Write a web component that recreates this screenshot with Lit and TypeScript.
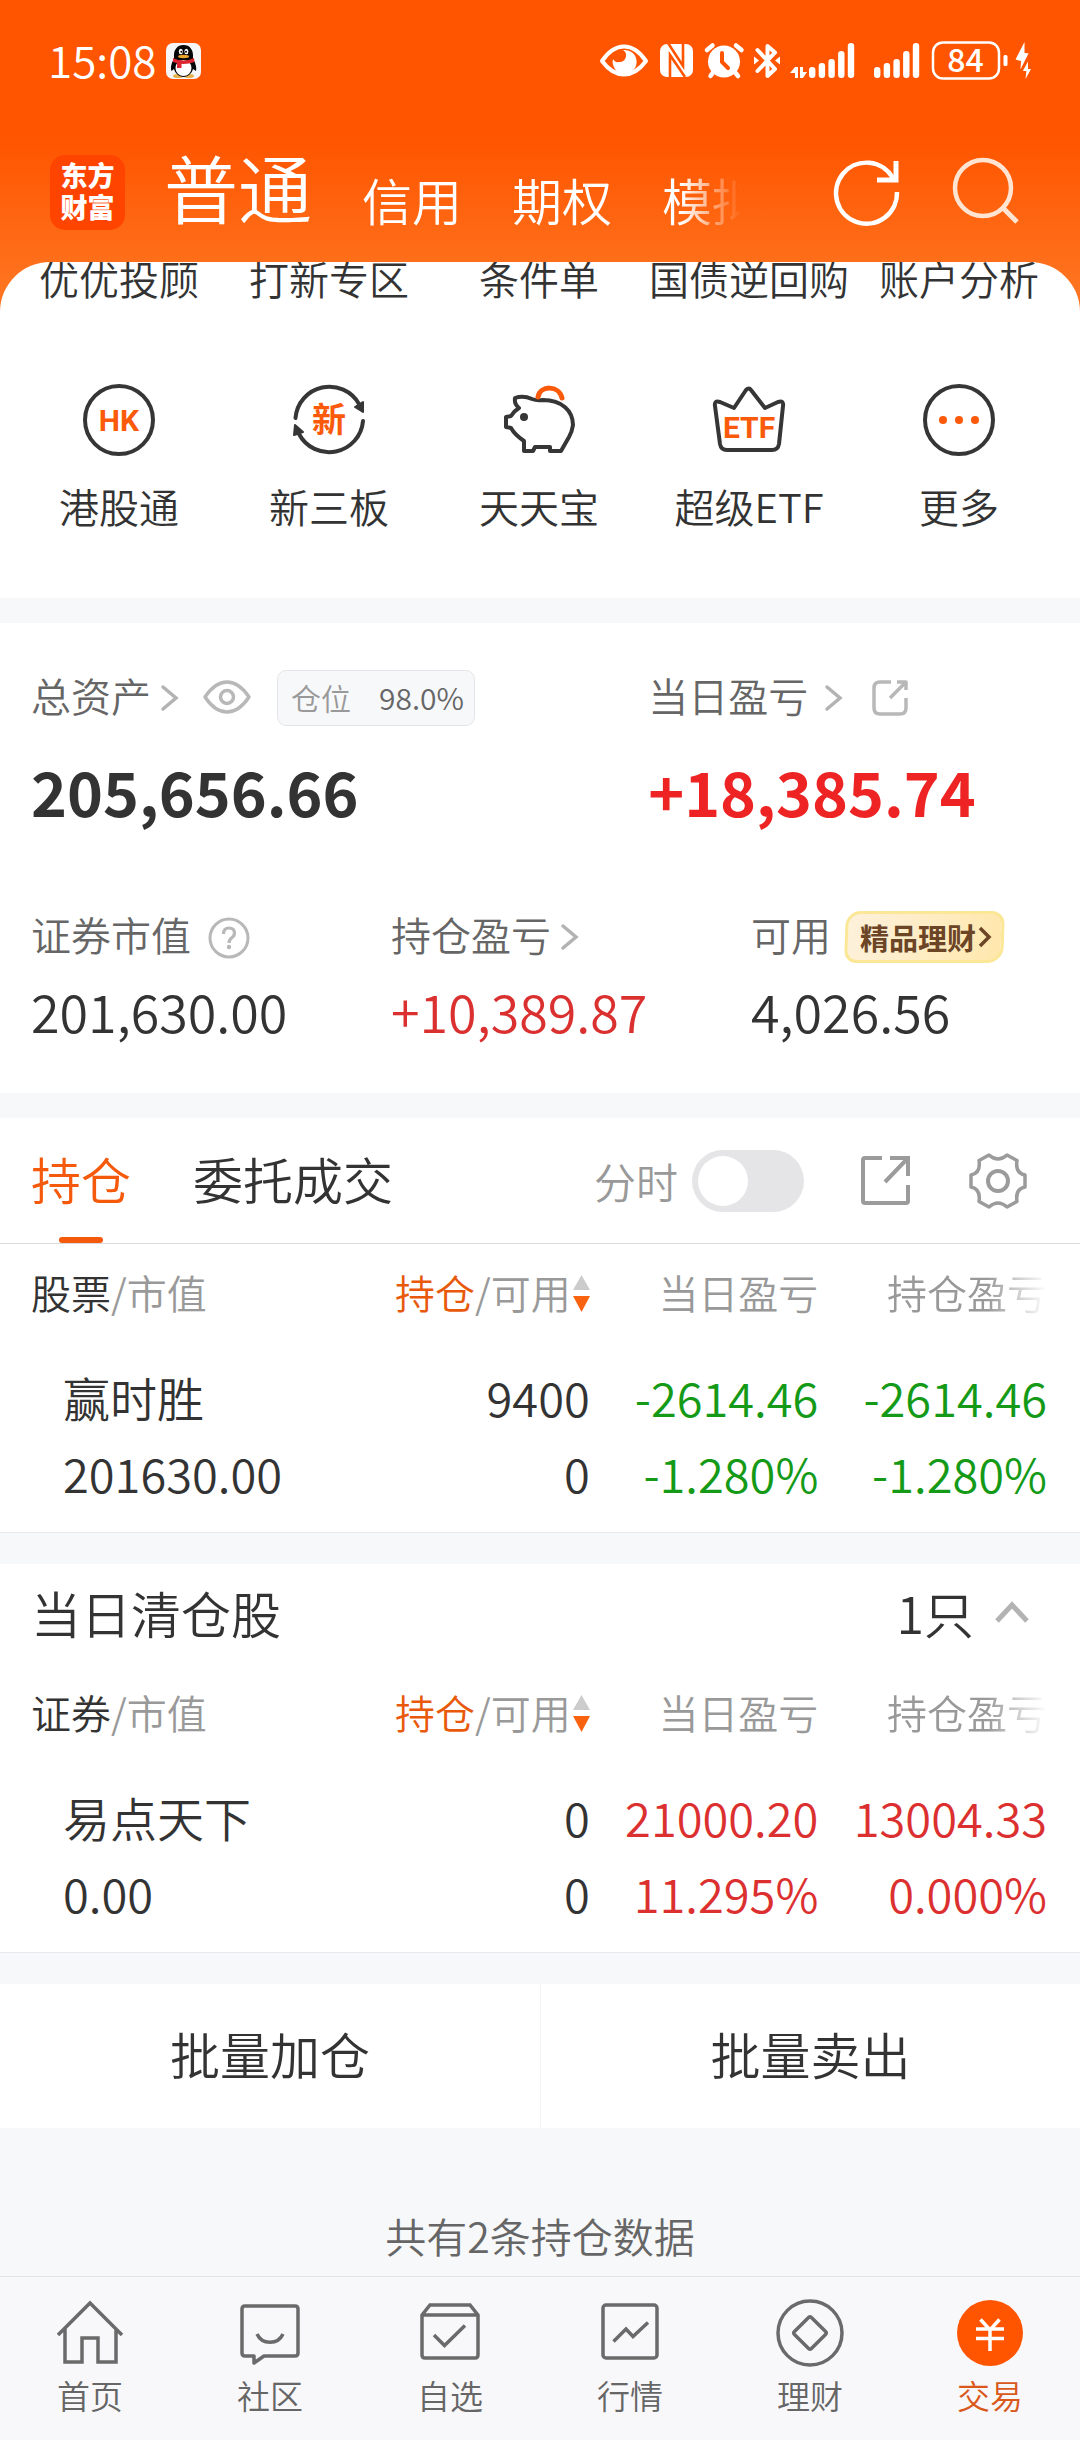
import { LitElement, html, css, svg, nothing } from "lit";
import { customElement, property, state } from "lit/decorators.js";
import { classMap } from "lit/directives/class-map.js";

type Tone = "ink" | "up" | "down";

interface Holding {
  name: string;
  value: string;
  held: string;
  usable: string;
  day: [string, string];
  total: [string, string];
  tone: Tone;
}

const openPositions: Holding[] = [
  {
    name: "赢时胜",
    value: "201630.00",
    held: "9400",
    usable: "0",
    day: ["-2614.46", "-1.280%"],
    total: ["-2614.46", "-1.280%"],
    tone: "down",
  },
];

const closedPositions: Holding[] = [
  {
    name: "易点天下",
    value: "0.00",
    held: "0",
    usable: "0",
    day: ["21000.20", "11.295%"],
    total: ["13004.33", "0.000%"],
    tone: "up",
  },
];

const fontStack = css`"Noto Sans CJK SC", "Noto Sans", sans-serif`;

const reset = css`
  *,
  *::before,
  *::after {
    box-sizing: border-box;
  }
  button {
    font: inherit;
    color: inherit;
    background: none;
    border: 0;
    padding: 0;
    margin: 0;
    text-align: inherit;
    cursor: pointer;
  }
  a {
    color: inherit;
    text-decoration: none;
  }
  svg {
    display: block;
    flex: none;
    overflow: visible;
  }
`;

const signalBars = (left: number) =>
  [26, 22, 18, 10, 2].map(
    (top, i) => svg`<rect x=${left + i * 9.7} y=${top} width="6.4" height=${37 - top} rx="3" fill="#fff"/>`,
  );

const chevronRight = html`<svg width="20" height="28" viewBox="0 0 20 28" aria-hidden="true">
  <path d="M3 3L16 14L3 25" fill="none" stroke="#b3b3b3" stroke-width="3.5" stroke-linecap="round"/>
</svg>`;

@customElement("status-bar")
export class StatusBar extends LitElement {
  static styles = [
    reset,
    css`
      :host {
        display: flex;
        align-items: center;
        height: 122px;
        padding: 0 48px;
        color: #fff;
      }
      .time {
        padding-bottom: 5px;
        font-size: 44px;
        line-height: 56px;
        margin-right: 10px;
      }
      .icons {
        display: flex;
        gap: 10px;
        margin-left: auto;
      }
      .battery {
        font-size: 32px;
        font-weight: 500;
      }
    `,
  ];

  render() {
    return html`
      <span class="time">15:08</span>
      <svg width="36" height="36" viewBox="0 0 36 36" aria-hidden="true">
        <rect width="35" height="36" rx="7" fill="#f6f6f8"/>
        <ellipse cx="12" cy="33" rx="5" ry="2" fill="#e5b24d"/>
        <ellipse cx="23" cy="33" rx="5" ry="2" fill="#e5b24d"/>
        <path d="M17.5 2C11 2 8 7 8 12V16C6 19 4 24 5.500 28L8 26C9 30 13 34 17.500 34C22 34 26 30 27 26L30 28C31 24 29 19 27 16V12C27 7 24 2 17.500 2Z" fill="#050505"/>
        <ellipse cx="17.500" cy="25" rx="8" ry="8" fill="#fff"/>
        <path d="M7 15Q17 20 28 15L28.500 19Q17 23 7 19Z" fill="#dc2530"/>
        <path d="M11 19L15.500 20V25H11Z" fill="#dc2530"/>
        <ellipse cx="14.800" cy="8.500" rx="2" ry="2.700" fill="#fff"/>
        <ellipse cx="20.400" cy="8.500" rx="2" ry="2.700" fill="#fff"/>
        <circle cx="15.300" cy="8.800" r="1"/>
        <circle cx="20" cy="8.800" r="1"/>
        <ellipse cx="17.600" cy="13.500" rx="5.500" ry="1.700" fill="#e9a52c"/>
      </svg>
      <div class="icons">
        <svg width="50" height="40" viewBox="0 0 50 40" role="img" aria-label="护眼模式">
          <path d="M3 20Q13 5.500 25 5.500Q37 5.500 47 20Q37 33.500 25 33.500Q13 33.500 3 20Z" fill="none" stroke="#fff" stroke-width="4" stroke-linejoin="round"/>
          <path d="M24 9A12 12 0 1 1 14 18A5.500 5.500 0 0 0 20 21A6.500 6.500 0 0 0 24 9Z" fill="#fff"/>
        </svg>
        <svg width="36" height="40" viewBox="0 0 36 40" role="img" aria-label="NFC">
          <rect x="1" y="3" width="33" height="33" rx="7" fill="#fff"/>
          <path d="M11 37V14L26 36M9 2L24 25V2" fill="none" stroke="#ff5500" stroke-width="2.600"/>
        </svg>
        <svg width="39" height="40" viewBox="0 0 39 40" role="img" aria-label="闹钟">
          <path d="M2 9L7.500 4.500M31 4.500L36.500 9M9 30L5.500 35M29 30L33 35" stroke="#fff" stroke-width="4.500" stroke-linecap="round"/>
          <circle cx="19" cy="20.500" r="16" fill="#fff"/>
          <path d="M17 12V21L23 27" fill="none" stroke="#ff5500" stroke-width="4" stroke-linecap="round"/>
        </svg>
        <svg width="26" height="40" viewBox="0 0 26 40" role="img" aria-label="蓝牙">
          <path d="M3.500 9L21 28L13.500 35V5L21 11.500L3.500 30" fill="none" stroke="#fff" stroke-width="4" stroke-linejoin="round" stroke-linecap="round"/>
          <path d="M0 15.500V23.500L5 19.500ZM26 15.500V23.500L21 19.500Z" fill="#fff"/>
        </svg>
        <svg width="73" height="40" viewBox="0 0 73 40" role="img" aria-label="移动信号一">
          <path d="M5 26V37H8V26ZM5 26L0 32H5ZM10 26V37H13V26ZM13 37L17 31H13Z" fill="#fff"/>
          ${signalBars(19)}
        </svg>
        <svg width="48" height="40" viewBox="0 0 48 40" role="img" aria-label="移动信号二">${signalBars(1)}</svg>
        <svg class="battery" width="74" height="40" viewBox="0 0 74 40">
          <rect x="2" y="1.500" width="66" height="36" rx="10" fill="none" stroke="#fff" stroke-width="2.500"/>
          <rect x="72.500" y="14" width="4" height="11" rx="1.500" fill="#fff"/>
          <text x="34.500" y="31" text-anchor="middle" fill="#fff">84</text>
        </svg>
        <svg width="17" height="40" viewBox="0 0 17 40" role="img" aria-label="正在充电">
          <path d="M9.500 1L0.500 18.500L6 20L5.500 28.500L13.600 12.300L9.500 12ZM13 20.500L7.800 30L11.300 30L10.500 38L16 28L13 28Z" fill="#fff"/>
        </svg>
      </div>
    `;
  }
}

@customElement("account-header")
export class AccountHeader extends LitElement {
  static styles = [
    reset,
    css`
      :host {
        display: flex;
        align-items: center;
        height: 140px;
        padding: 0 59px 0 50px;
        color: #fff;
      }
      .brand {
        width: 75px;
        height: 75px;
        flex: none;
        border-radius: 15px;
        background: #ff4400;
        padding: 4px 0;
        text-align: center;
        font-size: 27px;
        line-height: 32px;
        font-weight: 900;
      }
      .brand span {
        display: block;
      }
      .kinds {
        flex: 1;
        min-width: 0;
        display: flex;
        align-items: flex-end;
        gap: 50px;
        margin: 0 90px 0 39px;
        padding: 24px 0 36px;
        font-size: 50px;
        line-height: 48px;
        white-space: nowrap;
        overflow: hidden;
        mask-image: linear-gradient(to right, #000 0, #000 calc(100% - 60px), transparent);
      }
      .kinds .active {
        font-size: 74px;
        line-height: 74px;
      }
      .tools {
        display: flex;
        gap: 46px;
      }
    `,
  ];

  render() {
    return html`
      <a class="brand" href="#home"><span>东方</span><span>财富</span></a>
      <nav class="kinds">
        <button class="active" aria-current="page">普通</button>
        <button>信用</button>
        <button>期权</button>
        <button>模拟</button>
      </nav>
      <div class="tools">
        <button aria-label="刷新">
          <svg width="72" height="72" viewBox="0 0 72 72">
            <path d="M66 36A30.500 30.500 0 1 1 62 22" fill="none" stroke="#fff" stroke-width="4.500"/>
            <path d="M65 5V24H46" fill="none" stroke="#fff" stroke-width="5"/>
          </svg>
        </button>
        <button aria-label="搜索">
          <svg width="72" height="72" viewBox="0 0 72 72">
            <circle cx="34" cy="32" r="28" fill="none" stroke="#ffe4d2" stroke-width="4.500"/>
            <path d="M54 52L68 66" stroke="#ffe4d2" stroke-width="5"/>
          </svg>
        </button>
      </div>
    `;
  }
}

@customElement("shortcut-grid")
export class ShortcutGrid extends LitElement {
  static styles = [
    reset,
    css`
      :host {
        display: grid;
        grid-template-columns: repeat(5, 1fr);
        padding: 0 16px 72px 14px;
        overflow: hidden;
        font-size: 40px;
        color: #333;
        white-space: nowrap;
      }
      .label-only {
        display: flex;
        justify-content: center;
        line-height: 32px;
      }
      .tile {
        display: flex;
        flex-direction: column;
        align-items: center;
        gap: 30px;
        margin-top: 90px;
        line-height: 40px;
      }
      .glyph {
        fill: #fa5a0a;
        font-weight: 700;
        font-size: 34px;
      }
      .latin {
        fill: #fa5a0a;
        font-family: Roboto, sans-serif;
        font-weight: 700;
        font-size: 30px;
      }
    `,
  ];

  render() {
    const line = "#363636";
    return html`
      ${["优优投顾", "打新专区", "条件单", "国债逆回购", "账户分析"].map(
        (label) => html`<a class="label-only" href="#service">${label}</a>`,
      )}
      <a class="tile" href="#hk">
        <svg width="72" height="72" viewBox="0 0 72 72" aria-hidden="true">
          <circle cx="36" cy="36" r="34" fill="none" stroke=${line} stroke-width="4"/>
          <text class="latin" x="36" y="47" text-anchor="middle">HK</text>
        </svg>
        港股通
      </a>
      <a class="tile" href="#neeq">
        <svg width="72" height="72" viewBox="0 0 72 72" aria-hidden="true">
          <path d="M2.500 34A34 34 0 0 1 66 20M70 37A34 34 0 0 1 6 50" fill="none" stroke=${line} stroke-width="4" stroke-linecap="round"/>
          <path d="M62 23L70 18V28ZM2 41L1 51L10 48Z" fill=${line} stroke=${line} stroke-width="2" stroke-linejoin="round"/>
          <text class="glyph" x="36" y="48" text-anchor="middle">新</text>
        </svg>
        新三板
      </a>
      <a class="tile" href="#savings">
        <svg width="72" height="72" viewBox="0 0 72 72" aria-hidden="true">
          <path d="M12 14Q20 11 29 15Q34 17 40 16C59 16 70 27 70 41Q69 48 66 53L58 67H47V63L32 63L30 67H21V57Q12 51 8 44L3 43V33L8 32Q11 27 16 24Q11 20 12 14Z" fill="#fff" stroke=${line} stroke-width="4" stroke-linejoin="round"/>
          <circle cx="21" cy="33" r="4" fill=${line}/>
          <path d="M35 13C37 1 56 1 59 14" fill="none" stroke="#fa5a0a" stroke-width="5" stroke-linecap="round"/>
        </svg>
        天天宝
      </a>
      <a class="tile" href="#etf">
        <svg width="72" height="72" viewBox="0 0 72 72" aria-hidden="true">
          <path d="M33 6Q36 3 38 6L52 24L65 18Q71 16 70 22L66 60Q65 66 59 66H14Q8 66 7 60L2 22Q1 16 7 18L21 24Z" fill="none" stroke=${line} stroke-width="4" stroke-linejoin="round"/>
          <text class="latin" x="36" y="54" text-anchor="middle">ETF</text>
        </svg>
        超级ETF
      </a>
      <a class="tile" href="#more">
        <svg width="72" height="72" viewBox="0 0 72 72" aria-hidden="true">
          <circle cx="36" cy="36" r="34" fill="none" stroke=${line} stroke-width="4"/>
          <g fill="#fa5a0a"><circle cx="20" cy="36" r="4"/><circle cx="36" cy="36" r="4"/><circle cx="52" cy="36" r="4"/></g>
        </svg>
        更多
      </a>
    `;
  }
}

@customElement("asset-summary")
export class AssetSummary extends LitElement {
  static styles = [
    reset,
    css`
      :host {
        display: block;
        background: #fff;
        padding: 47px 0 52px;
        font-size: 40px;
        color: #666;
        white-space: nowrap;
      }
      .totals {
        display: grid;
        grid-template-columns: 4fr 3fr;
        margin-bottom: 78px;
      }
      .details {
        display: grid;
        grid-template-columns: repeat(3, 1fr);
      }
      .cell {
        padding-left: 31px;
      }
      .caption {
        display: flex;
        align-items: center;
        height: 56px;
        line-height: 48px;
      }
      .details .caption {
        height: 52px;
      }
      .text {
        padding-bottom: 6px;
      }
      .link {
        display: flex;
        align-items: center;
        gap: 9px;
      }
      .link.wide {
        gap: 16px;
      }
      .eye {
        margin-left: 22px;
      }
      .ratio {
        display: flex;
        align-items: center;
        gap: 28px;
        height: 56px;
        margin-left: 25px;
        padding: 0 10px 3px 13px;
        border: 1px solid #e4e5e8;
        border-radius: 9px;
        background: #f7f8fa;
        font-size: 30px;
      }
      .ratio dt {
        color: #999;
      }
      .ratio dd {
        margin: 0;
      }
      .share {
        margin-left: 24px;
      }
      .help {
        margin-left: 16px;
      }
      .big {
        margin-top: 29px;
        font-size: 61px;
        font-weight: 700;
        line-height: 72px;
        color: #333;
        padding-bottom: 6px;
      }
      .amount {
        margin-top: 18px;
        font-size: 52px;
        line-height: 60px;
        color: #333;
      }
      .big.up {
        color: #ee2424;
      }
      .amount.up {
        color: #da3030;
      }
      .promo {
        position: relative;
        isolation: isolate;
        display: flex;
        align-items: center;
        gap: 2px;
        height: 52px;
        margin-left: 14px;
        padding: 0 12px 0 15px;
        font-size: 29px;
        font-weight: 700;
        color: #6b4526;
      }
      .promo::before {
        content: "";
        position: absolute;
        inset: 0;
        z-index: -1;
        border: 3px solid #fbe795;
        border-radius: 15px 13px 16px 12px;
        background: linear-gradient(100deg, #fdf1db, #ffe7ac);
        transform: skewX(-2deg);
      }
    `,
  ];

  render() {
    return html`
      <div class="totals">
        <div class="cell">
          <div class="caption">
            <button class="link"><span class="text">总资产</span>${chevronRight}</button>
            <button class="eye" aria-label="隐藏金额">
              <svg width="50" height="36" viewBox="0 0 50 36">
                <path d="M3 17Q13 2 25 2Q37 2 47 17Q37 32 25 32Q13 32 3 17Z" fill="none" stroke="#b8b8b8" stroke-width="3.500" stroke-linejoin="round"/>
                <circle cx="25" cy="17" r="6.500" fill="none" stroke="#b8b8b8" stroke-width="3.500"/>
              </svg>
            </button>
            <dl class="ratio"><dt>仓位</dt><dd>98.0%</dd></dl>
          </div>
          <div class="big">205,656.66</div>
        </div>
        <div class="cell">
          <div class="caption">
            <button class="link wide"><span class="text">当日盈亏</span>${chevronRight}</button>
            <button class="share" aria-label="分享当日盈亏">
              <svg width="44" height="44" viewBox="0 0 44 44">
                <path d="M23 6H12Q6 6 6 12V32Q6 38 12 38H32Q38 38 38 32V22M29 6H38V14M38 6L22 22" fill="none" stroke="#b8b8b8" stroke-width="3.500" stroke-linejoin="round"/>
              </svg>
            </button>
          </div>
          <div class="big up">+18,385.74</div>
        </div>
      </div>
      <div class="details">
        <div class="cell">
          <div class="caption">
            <span class="text">证券市值</span>
            <button class="help" aria-label="证券市值说明">
              <svg width="44" height="44" viewBox="0 0 44 44">
                <circle cx="22" cy="23" r="19" fill="none" stroke="#b8b8b8" stroke-width="3"/>
                <path d="M16.500 19Q16.500 13 22 13Q27.500 13 27.500 18Q27.500 21 24.500 23Q22 25 22 28" fill="none" stroke="#b8b8b8" stroke-width="3.200"/>
                <circle cx="22" cy="32" r="2.200" fill="#b8b8b8"/>
              </svg>
            </button>
          </div>
          <div class="amount">201,630.00</div>
        </div>
        <div class="cell">
          <div class="caption"><button class="link"><span class="text">持仓盈亏</span>${chevronRight}</button></div>
          <div class="amount up">+10,389.87</div>
        </div>
        <div class="cell">
          <div class="caption">
            <span class="text">可用</span>
            <a class="promo" href="#wealth">
              精品理财
              <svg width="14" height="24" viewBox="0 0 14 24" aria-hidden="true">
                <path d="M2 3L11 12L2 21" fill="none" stroke="#6b4526" stroke-width="3.500"/>
              </svg>
            </a>
          </div>
          <div class="amount">4,026.56</div>
        </div>
      </div>
    `;
  }
}

@customElement("holdings-table")
export class HoldingsTable extends LitElement {
  @property() heading = "股票";
  @property({ attribute: false }) rows: Holding[] = [];

  static styles = [
    reset,
    css`
      :host {
        display: block;
        padding: 0 33px 21px 31px;
        border-bottom: 1px solid #e8e9ec;
        background: #fff;
        white-space: nowrap;
      }
      table {
        width: 100%;
        table-layout: fixed;
        border-collapse: collapse;
      }
      .lead {
        width: 32.500%;
      }
      th,
      td {
        padding: 0;
        font-weight: inherit;
        text-align: right;
      }
      th:first-child {
        text-align: left;
      }
      thead th {
        height: 98px;
        padding-bottom: 3px;
        font-size: 40px;
        line-height: 48px;
        color: #999;
      }
      .ink {
        color: #333;
      }
      .accent {
        color: #e8590c;
      }
      .sort {
        display: inline-flex;
        align-items: center;
        gap: 2px;
      }
      .fade {
        mask-image: linear-gradient(to left, transparent, #000 60px);
      }
      tbody th,
      tbody td {
        padding-top: 17px;
        font-size: 47px;
        line-height: 76px;
        color: #333;
      }
      tbody th {
        padding-left: 32px;
      }
      tbody span {
        display: block;
      }
      tbody .up {
        color: #dc3030;
      }
      tbody .down {
        color: #159a18;
      }
    `,
  ];

  render() {
    return html`
      <table>
        <thead>
          <tr>
            <th class="lead" scope="col"><span class="ink">${this.heading}</span>/市值</th>
            <th scope="col" aria-sort="descending">
              <button class="sort">
                <span><span class="accent">持仓</span>/可用</span>
                <svg width="17" height="38" viewBox="0 0 17 38" aria-hidden="true">
                  <path d="M8.500 2L17 17H0Z" fill="#ccc"/>
                  <path d="M8.500 39L17 23H0Z" fill="#f9620f"/>
                </svg>
              </button>
            </th>
            <th scope="col">当日盈亏</th>
            <th class="fade" scope="col">持仓盈亏</th>
          </tr>
        </thead>
        <tbody>
          ${this.rows.map(
            (r) => html`<tr>
              <th scope="row"><span>${r.name}</span><span>${r.value}</span></th>
              <td><span>${r.held}</span><span>${r.usable}</span></td>
              <td class=${r.tone}>${r.day.map((v) => html`<span>${v}</span>`)}</td>
              <td class=${r.tone}>${r.total.map((v) => html`<span>${v}</span>`)}</td>
            </tr>`,
          )}
        </tbody>
      </table>
    `;
  }
}

@customElement("holdings-panel")
export class HoldingsPanel extends LitElement {
  @state() private tab = 0;
  @state() private expanded = true;

  static styles = [
    reset,
    css`
      :host {
        display: block;
        color: #333;
        white-space: nowrap;
      }
      .bar {
        display: flex;
        align-items: center;
        height: 126px;
        padding: 0 52px 0 31px;
        border-bottom: 1px solid #dcdcdf;
        background: #fff;
      }
      .tab {
        position: relative;
        height: 125px;
        margin-right: 62px;
        padding-bottom: 5px;
        font-size: 50px;
      }
      .tab.active {
        color: #f55a0c;
      }
      .tab.active::after {
        content: "";
        position: absolute;
        left: 50%;
        bottom: 0;
        width: 44px;
        height: 6px;
        margin-left: -22px;
        border-radius: 3px;
        background: #f55a0c;
      }
      .minute {
        display: flex;
        align-items: center;
        gap: 14px;
        margin-left: auto;
        font-size: 42px;
        line-height: 46px;
        color: #999;
      }
      .switch {
        appearance: none;
        width: 112px;
        height: 62px;
        margin: 0;
        padding: 6px;
        border-radius: 31px;
        background: #e5e5e7;
      }
      .switch::before {
        content: "";
        display: block;
        width: 50px;
        height: 50px;
        border-radius: 25px;
        background: #fff;
      }
      .switch:checked {
        background: #f55a0c;
      }
      .switch:checked::before {
        margin-left: auto;
      }
      .share,
      .settings {
        margin-left: 54px;
      }
      .cleared {
        display: flex;
        align-items: center;
        justify-content: space-between;
        width: 100%;
        height: 100px;
        margin-top: 31px;
        padding: 0 50px 5px 31px;
        background: #fff;
        font-size: 50px;
      }
      .count {
        display: flex;
        align-items: center;
        gap: 20px;
      }
      .actions {
        display: grid;
        grid-template-columns: 1fr 1fr;
        height: 144px;
        margin-top: 31px;
        background: #fff;
        font-size: 50px;
      }
      .actions button {
        text-align: center;
        padding-bottom: 6px;
      }
      .actions button + button {
        border-left: 1px solid #f3f4f6;
      }
    `,
  ];

  render() {
    const tabs = ["持仓", "委托成交"];
    return html`
      <div class="bar">
        ${tabs.map(
          (t, i) => html`<button
            class=${classMap({ tab: true, active: this.tab === i })}
            aria-pressed=${this.tab === i}
            @click=${() => (this.tab = i)}
          >${t}</button>`,
        )}
        <label class="minute">分时<input class="switch" type="checkbox" role="switch"></label>
        <button class="share" aria-label="分享持仓">
          <svg width="56" height="56" viewBox="0 0 56 56">
            <path d="M24 5H7Q5 5 5 7V48Q5 50 7 50H48Q50 50 50 48V32M32 5H50V23M50 5L27 29" fill="none" stroke="#9b9b9b" stroke-width="4"/>
          </svg>
        </button>
        <button class="settings" aria-label="持仓设置">
          <svg width="60" height="60" viewBox="0 0 60 60">
            <path d="M21 4Q30 12 39 4L49 9.500Q47 22 57 24V36Q47 38 49 50.500L39 56Q30 48 21 56L11 50.500Q13 38 3 36V24Q13 22 11 9.500Z" fill="none" stroke="#9b9b9b" stroke-width="3.500" stroke-linejoin="round"/>
            <circle cx="30" cy="30" r="10" fill="none" stroke="#9b9b9b" stroke-width="4"/>
          </svg>
        </button>
      </div>
      <holdings-table heading="股票" .rows=${openPositions}></holdings-table>
      <button class="cleared" aria-expanded=${this.expanded} @click=${() => (this.expanded = !this.expanded)}>
        <span>当日清仓股</span>
        <span class="count">1只
          <svg width="36" height="24" viewBox="0 0 36 24" aria-hidden="true">
            <path d="M3 21L18 5L33 21" fill="none" stroke="#b3b3b3" stroke-width="5"/>
          </svg>
        </span>
      </button>
      ${this.expanded ? html`<holdings-table heading="证券" .rows=${closedPositions}></holdings-table>` : nothing}
      <div class="actions"><button>批量加仓</button><button>批量卖出</button></div>
    `;
  }
}

@customElement("bottom-nav")
export class BottomNav extends LitElement {
  static styles = [
    reset,
    css`
      :host {
        display: grid;
        grid-template-columns: repeat(6, 1fr);
        padding: 20px 0 27px;
        border-top: 1px solid #e2e3e5;
        background: #f8f8fb;
        color: #666;
        font-size: 33px;
        line-height: 36px;
      }
      .item {
        display: flex;
        flex-direction: column;
        align-items: center;
        gap: 8px;
      }
      .item.active {
        color: #d9581a;
      }
    `,
  ];

  render() {
    const items = [
      {
        label: "首页",
        art: svg`<path d="M4 38L36 6L68 38M11 31V65H28V41H44V65H62V31"/>`,
      },
      {
        label: "社区",
        art: svg`<path d="M11 9H61Q64 9 64 12V56Q64 59 61 59H30L20 66V59H11Q8 59 8 56V12Q8 9 11 9Z" stroke-linejoin="round"/>
          <path d="M23 37C28 48 44 48 49 37"/>`,
      },
      {
        label: "自选",
        art: svg`<path d="M8 18L16 8H56L64 18V58Q64 61 61 61H11Q8 61 8 58ZM8 18H64M20 38L30.500 48.500L51 28.500"/>`,
      },
      {
        label: "行情",
        art: svg`<rect x="9" y="8" width="54" height="53" rx="3"/><path d="M19.500 44.500L32 32L39 39.500L54 25.500"/>`,
      },
      {
        label: "理财",
        art: svg`<circle cx="36" cy="36" r="32"/><rect x="24" y="24" width="24" height="24" rx="2" transform="rotate(45 36 36)"/>`,
      },
      {
        label: "交易",
        active: true,
        art: svg`<circle cx="36" cy="36" r="33" fill="#ff5500" stroke="none"/>
          <path d="M26.500 22.500L36 33L45.500 22.500M36 33V54M22 32H50M22 41.500H50" stroke="#fff" stroke-width="3.500"/>`,
      },
    ];
    return html`${items.map(
      (i) => html`<a
        class=${classMap({ item: true, active: !!i.active })}
        href="#tab"
        aria-current=${i.active ? "page" : nothing}
      >
        <svg width="72" height="72" viewBox="0 0 72 72" fill="none" stroke="#6a6a6a" stroke-width="3.500" aria-hidden="true">${i.art}</svg>
        ${i.label}
      </a>`,
    )}`;
  }
}

@customElement("app-root")
export class AppRoot extends LitElement {
  static styles = [
    reset,
    css`
      :host {
        display: flex;
        flex-direction: column;
        min-height: 100vh;
        background: #f7f8fa;
        font-family: ${fontStack};
        font-weight: 350;
      }
      .top {
        background: linear-gradient(#ff5500 140px, #ff7420 290px);
      }
      .sheet {
        background: #fff;
        border-radius: 50px 50px 0 0;
        overflow: hidden;
      }
      .summary {
        margin: 25px 0;
      }
      .note {
        margin: 0;
        padding: 87px 0 21px;
        text-align: center;
        font-size: 41px;
        line-height: 40px;
        color: #666;
      }
      .dock {
        margin-top: auto;
      }
    `,
  ];

  render() {
    return html`
      <header class="top">
        <status-bar></status-bar>
        <account-header></account-header>
        <div class="sheet"><shortcut-grid></shortcut-grid></div>
      </header>
      <asset-summary class="summary"></asset-summary>
      <holdings-panel></holdings-panel>
      <p class="note">共有2条持仓数据</p>
      <bottom-nav class="dock"></bottom-nav>
    `;
  }
}
